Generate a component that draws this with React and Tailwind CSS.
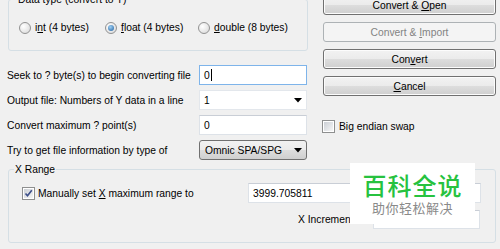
import React from "react";

function Radio({ checked }) {
    return (
        <span className="relative flex h-[12px] w-[12px] shrink-0 items-center justify-center rounded-full border border-[#929292] bg-[radial-gradient(circle_at_35%_35%,#ffffff,#d6d6d6)]">
            {checked && (
                <span className="h-[6px] w-[6px] rounded-full bg-[radial-gradient(circle_at_40%_35%,#9fd1f5,#1f5e9e)]" />
            )}
        </span>
    );
}

function Checkbox({ checked }) {
    return (
        <span className="flex h-[13px] w-[13px] shrink-0 items-center justify-center border border-[#8e8f8f] bg-white">
            <span className="flex h-[9px] w-[9px] items-center justify-center bg-[linear-gradient(135deg,#cbcfd5,#f6f6f6)]">
                {checked && (
                    <svg width="9" height="9" viewBox="0 0 9 9">
                        <path d="M1.5 4.5 L3.5 6.8 L7.8 1.2" fill="none" stroke="#3d4f8a" strokeWidth="1.6" />
                    </svg>
                )}
            </span>
        </span>
    );
}

function Button({ children, disabled }) {
    return (
        <div
            className={
                disabled
                    ? "flex h-[20px] items-center justify-center rounded-[3px] border border-[#adb2b5] bg-[#f4f4f4] text-[#838383]"
                    : "flex h-[20px] items-center justify-center rounded-[3px] border border-[#707070] bg-[linear-gradient(#f2f2f2,#ebebeb_50%,#dddddd_51%,#cfcfcf)] shadow-[inset_0_0_0_1px_#fcfcfc]"
            }>
            <span className="whitespace-pre">{children}</span>
        </div>
    );
}

function Arrow() {
    return (
        <svg width="8" height="5" viewBox="0 0 8 5" className="mr-[4px]">
            <path d="M0 0 H8 L4 4.5 Z" fill="#000" />
        </svg>
    );
}

export default function App() {
    return (
        <div className="relative h-[249px] w-[500px] overflow-hidden bg-[#f0f0f0] font-['Liberation_Sans',Arial,sans-serif] text-[10.3px] leading-[13px] text-black">
            <div className="-mt-[7px] flex">
                {/* left column */}
                <div className="w-[307px] pl-[7px]">
                    <fieldset className="ml-[1px] h-[58px] w-[300px] rounded-[3px] border border-[#d5dfe5]">
                        <legend className="ml-[8px] px-[1px] leading-[13px]">Data type (convert to Y)</legend>
                        <div className="mt-[15px] flex items-center pl-[10px]">
                            <div className="flex w-[86px] items-center gap-[4px]">
                                <Radio />
                                <span>i<u>n</u>t (4 bytes)</span>
                            </div>
                            <div className="flex w-[93px] items-center gap-[4px]">
                                <Radio checked />
                                <span><u>f</u>loat (4 bytes)</span>
                            </div>
                            <div className="flex items-center gap-[4px]">
                                <Radio />
                                <span><u>d</u>ouble (8 bytes)</span>
                            </div>
                        </div>
                    </fieldset>

                    <div className="mt-[14px] flex flex-col gap-[5px]">
                        <div className="flex h-[20px] items-center justify-between">
                            <span>Seek to ? byte(s) to begin converting file</span>
                            <div className="flex h-[20px] w-[108px] items-center border border-[#7eb4ea] bg-white pl-[4px]">
                                0<span className="ml-[1px] h-[12px] w-[1px] bg-black" />
                            </div>
                        </div>
                        <div className="flex h-[20px] items-center justify-between">
                            <span>Output file: Numbers of Y data in a line</span>
                            <div className="flex h-[20px] w-[108px] items-center justify-between border border-[#e3e7ec] bg-white pl-[4px]">
                                1<Arrow />
                            </div>
                        </div>
                        <div className="flex h-[20px] items-center justify-between">
                            <span>Convert maximum ? point(s)</span>
                            <div className="flex h-[20px] w-[108px] items-center border border-[#dde2e8] border-t-[#c9ced6] bg-white pl-[4px]">
                                0
                            </div>
                        </div>
                        <div className="flex h-[20px] items-center justify-between">
                            <span>Try to get file information by type of</span>
                            <div className="flex h-[20px] w-[108px] items-center justify-between rounded-[3px] border border-[#707070] bg-[linear-gradient(#f2f2f2,#ebebeb_50%,#dddddd_51%,#cfcfcf)] pl-[5px]">
                                Omnic SPA/SPG<Arrow />
                            </div>
                        </div>
                    </div>
                </div>

                {/* right column */}
                <div className="ml-[16px] w-[173px]">
                    <div className="mt-[2px] flex flex-col gap-[7px]">
                        <Button>Convert &amp;{" "}<u>O</u>pen</Button>
                        <Button disabled>Convert &amp;{" "}<u>I</u>mport</Button>
                        <Button>Con<u>v</u>ert</Button>
                        <Button><u>C</u>ancel</Button>
                    </div>
                    <div className="-ml-[1px] mt-[24px] flex items-center gap-[4px]">
                        <Checkbox />
                        <span>Big endian swap</span>
                    </div>
                </div>
            </div>

            <fieldset className="ml-[8px] mt-[3px] h-[80px] w-[488px] rounded-[3px] border border-[#d5dfe5]">
                <legend className="ml-[5px] px-[1px] leading-[13px]">X Range</legend>
                <div className="mt-[7px] flex h-[20px] items-center pl-[13px] pr-[14px]">
                    <Checkbox checked />
                    <span className="ml-[3px]">Manually set <u>X</u> maximum range to</span>
                    <div className="ml-auto flex h-[20px] w-[233px] items-center border border-[#dde2e8] border-t-[#c9ced6] bg-white pl-[4px]">
                        3999.705811
                    </div>
                </div>
                <div className="mt-[7px] flex h-[19px] items-center pl-[289px]">
                    <span className="w-[75px]">X Increment:</span>
                    <div className="h-[19px] w-[107px] border border-[#dde2e8] border-t-[#c9ced6] bg-white" />
                </div>
            </fieldset>

            {/* watermark overlay */}
            <div className="absolute left-[350px] top-[163px] flex h-[61px] w-[125px] flex-col items-center bg-white pt-[10px] font-['Noto_Sans_CJK_SC',sans-serif]">
                <span className="text-[24px] font-medium leading-[24px] tracking-[1px] text-[#27c23f]">百科全说</span>
                <span className="mt-[3px] text-[13px] leading-[15px] tracking-[0.5px] text-[#8a8a8a]">助你轻松解决</span>
            </div>
        </div>
    );
}
